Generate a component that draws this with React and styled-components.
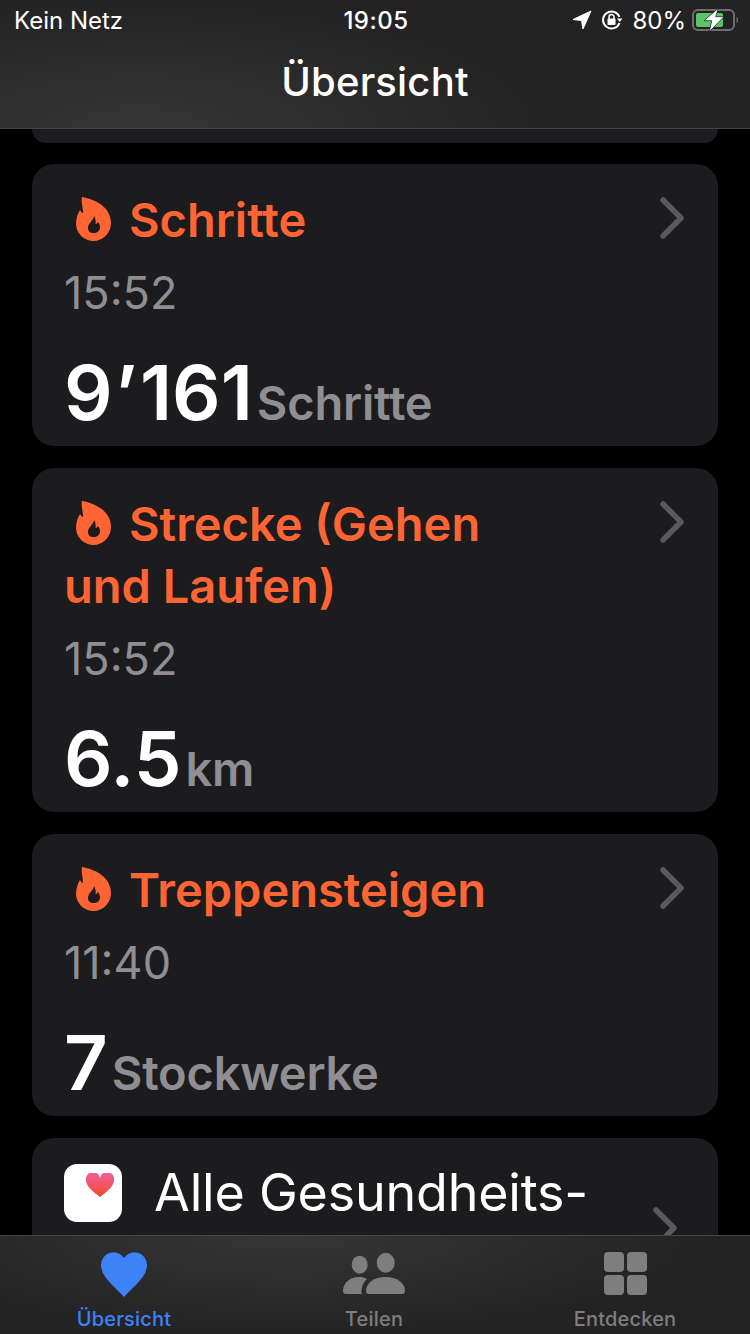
import React from "react";
import styled, { createGlobalStyle } from "styled-components";

const Global = createGlobalStyle`
  html, body { margin: 0; padding: 0; background: #000; }
  body { font-family: Inter, "Liberation Sans", sans-serif; }
`;

const Screen = styled.div`
  width: 750px;
  height: 1334px;
  display: flex;
  flex-direction: column;
  overflow: hidden;
  background: #000;
  color: #fff;
`;

const Header = styled.header`
  flex: none;
  height: 128px;
  border-bottom: 1px solid #464648;
  background: radial-gradient(ellipse 420px 130px at 140px 128px, #363636 0%, #2a2a2a 60%, #232323 100%);
  display: flex;
  flex-direction: column;
`;

const StatusBar = styled.div`
  height: 40px;
  padding: 0 12px 0 14px;
  display: grid;
  grid-template-columns: 1fr auto 1fr;
  align-items: center;
  font-size: 24px;
`;

const StatusRight = styled.div`
  display: flex;
  align-items: center;
  justify-content: flex-end;
  gap: 9px;
`;

const Clock = styled.span`
  font-weight: 500;
  letter-spacing: 0.5px;
`;

const BatteryIcon = styled.svg`
  margin-left: -3px;
`;

const NavTitle = styled.h1`
  margin: 18px 0 0;
  text-align: center;
  font-size: 40px;
  line-height: 48px;
  font-weight: 500;
  letter-spacing: 0.2px;
`;

const Feed = styled.main`
  flex: 1;
  min-height: 0;
  overflow: hidden;
  padding: 0 32px;
  display: flex;
  flex-direction: column;
  gap: 22px;
`;

const Stub = styled.div`
  flex: none;
  height: 14px;
  margin-bottom: -1px;
  background: #1c1c1e;
  border-radius: 0 0 22px 22px;
`;

const Card = styled.article`
  flex: none;
  position: relative;
  background: #1c1c1e;
  border-radius: 22px;
  padding: 25px 32px 0;
  height: ${(p) => p.$h}px;
  box-sizing: border-box;
`;

const Title = styled.div`
  width: 480px;
  color: #ff6534;
  font-size: 47px;
  line-height: 62px;
  font-weight: 600;
`;

const Flame = styled.svg`
  width: 35px;
  height: 44px;
  margin: 0 18px 0 12px;
  vertical-align: -4px;
`;

const Time = styled.div`
  color: #8e8e93;
  font-size: 45px;
  line-height: 50px;
  margin-top: 17px;
`;

const Metric = styled.div`
  position: absolute;
  left: 32px;
  bottom: 9px;
  display: flex;
  align-items: baseline;
  gap: 4px;
`;

const Value = styled.span`
  font-size: 76px;
  line-height: 90px;
  font-weight: 600;
`;

const Tick = styled.span`
  margin: 0 3px 0 2px;
`;

const Unit = styled.span`
  color: #8e8e93;
  font-size: 47px;
  font-weight: 600;
  letter-spacing: -0.2px;
`;

const Chevron = styled.svg`
  position: absolute;
  right: ${(p) => p.$right}px;
  top: ${(p) => p.$top}px;
  width: 24px;
  height: 42px;
`;

const AllRow = styled.article`
  flex: none;
  position: relative;
  height: 200px;
  background: #1c1c1e;
  border-radius: 22px;
  padding: 26px 32px 0;
  display: flex;
  gap: 32px;
`;

const AppIcon = styled.div`
  flex: none;
  width: 58px;
  height: 58px;
  background: #fff;
  border-radius: 13px;
  display: flex;
  justify-content: flex-end;
  padding: 9px 8px 0 0;
  box-sizing: border-box;
`;

const AllText = styled.div`
  font-size: 52px;
  line-height: 58px;
  letter-spacing: -0.2px;
`;

const TabBar = styled.nav`
  flex: none;
  height: 98px;
  border-top: 1px solid #464648;
  background: radial-gradient(ellipse 420px 100px at 290px 0, #363636 0%, #2a2a2a 60%, #232323 100%);
  display: grid;
  grid-template-columns: 248px 252px 250px;
  position: relative;
  z-index: 1;
`;

const Tab = styled.div`
  display: flex;
  flex-direction: column;
  align-items: center;
  color: ${(p) => (p.$active ? "#3d82f6" : "#7e7e7e")};
  font-size: 20px;
  font-weight: 500;
  letter-spacing: 0.2px;
  padding-top: 16px;
  svg { height: 46px; display: block; }
  span { margin-top: 9px; line-height: 24px; }
`;

const FlameIcon = () => (
  <Flame viewBox="0 0 35 44">
    <path
      fill="#ff6534"
      fillRule="evenodd"
      d="M6 0C13 1 35 7 35 26C35 36 27 44 17.500 44C8 44 0 36 0 27C0 21 2 16 4 13C5 15 6 16 7 16C7 10 5 5 6 0ZM18 19C18 23 12 26 12 31C12 34 14 36 17.500 36C21 36 24 34 24 30C24 28 23 26 22 25C21 26.500 20.500 27 19.500 27C20 24 19.500 21 18 19Z"
    />
  </Flame>
);

const ChevronIcon = ({ top, right = 34 }) => (
  <Chevron $top={top} $right={right} viewBox="0 0 24 42">
    <path d="M3 3l18 18L3 39" fill="none" stroke="#5a5a5e" strokeWidth="5.500" strokeLinecap="round" strokeLinejoin="round" />
  </Chevron>
);

const Reading = ({ title, time, value, unit, h }) => (
  <Card $h={h}>
    <Title>
      <FlameIcon />
      {title}
    </Title>
    <Time>{time}</Time>
    <Metric>
      <Value>{value}</Value>
      <Unit>{unit}</Unit>
    </Metric>
    <ChevronIcon top={33} />
  </Card>
);

export default function App() {
  return (
    <Screen>
      <Global />
      <Header>
        <StatusBar>
          <span>Kein Netz</span>
          <Clock>19:05</Clock>
          <StatusRight>
            <svg width="20" height="20" viewBox="0 0 20 20">
              <path d="M19 1L1 9.500l8.500 1L11 19z" fill="#fff" stroke="#fff" strokeLinejoin="round" />
            </svg>
            <svg width="22" height="22" viewBox="0 0 22 22">
              <path d="M18.500 14A8.500 8.500 0 1 1 18.500 8" fill="none" stroke="#fff" strokeWidth="2" />
              <path d="M16 9.500h5.500l-2.700 3.500z" fill="#fff" />
              <rect x="6.500" y="9.500" width="8" height="6.500" rx="1" fill="#fff" />
              <path d="M8 10V8a2.500 2.500 0 0 1 5 0v2" fill="none" stroke="#fff" strokeWidth="1.500" />
            </svg>
            <span>80%</span>
            <BatteryIcon width="46" height="24" viewBox="0 0 46 24">
              <rect x="1" y="2" width="41" height="20" rx="5" fill="none" stroke="#6e6e6e" strokeWidth="2" />
              <rect x="4" y="5" width="27" height="14" rx="2" fill="#5ac466" />
              <path d="M44.500 9c1 .5 1.500 1.500 1.500 3s-.5 2.500-1.500 3z" fill="#6e6e6e" />
              <path d="M26.300 .3L12 12.700h7.700L17.300 23.700 32 8.700h-8.300z" fill="#fff" stroke="#232323" strokeWidth="0.800" />
            </BatteryIcon>
          </StatusRight>
        </StatusBar>
        <NavTitle>Übersicht</NavTitle>
      </Header>
      <Feed>
        <Stub />
        <Reading h={282} title="Schritte" time="15:52" value={<>9<Tick>’</Tick>161</>} unit="Schritte" />
        <Reading h={344} title="Strecke (Gehen und Laufen)" time="15:52" value="6.5" unit="km" />
        <Reading h={282} title="Treppensteigen" time="11:40" value="7" unit="Stockwerke" />
        <AllRow>
          <AppIcon>
            <svg width="28" height="24" viewBox="0 0 28 24">
              <defs>
                <linearGradient id="hg" x1="0" y1="0" x2="0" y2="1">
                  <stop offset="0" stopColor="#f160a0" />
                  <stop offset="1" stopColor="#f04a2c" />
                </linearGradient>
              </defs>
              <path d="M14 24C6 18 0 13 0 7a7 7 0 0 1 14-2 7 7 0 0 1 14 2c0 6-6 11-14 17z" fill="url(#hg)" />
            </svg>
          </AppIcon>
          <AllText>Alle Gesundheits-</AllText>
          <ChevronIcon top={69} right={41} />
        </AllRow>
      </Feed>
      <TabBar>
        <Tab $active>
          <svg width="46" height="46" viewBox="0 0 46 46">
            <path d="M23 45C14 35 0 25 0 13A12.500 12.500 0 0 1 23 6 12.500 12.500 0 0 1 46 13c0 12-14 22-23 32z" fill="#3d82f6" />
          </svg>
          <span>Übersicht</span>
        </Tab>
        <Tab>
          <svg width="62" height="46" viewBox="0 0 62 46">
            <g fill="#7e7e7e">
              <ellipse cx="42.700" cy="10.700" rx="9" ry="10" />
              <ellipse cx="16.700" cy="12.700" rx="8" ry="9" />
              <path d="M23 39c0-8 8-14 19.500-14S62 31 62 39c0 2-1 3-3 3H26c-2 0-3-1-3-3z" />
              <path d="M0 39c0-8 7-14 16-14 3 0 5 .5 8 2-3 3-5 6-5.500 11-.2 2 0 3 .5 4H3c-2 0-3-1-3-3z" />
            </g>
          </svg>
          <span>Teilen</span>
        </Tab>
        <Tab>
          <svg width="43" height="46" viewBox="0 0 43 46">
            <g fill="#7e7e7e">
              <rect x="0" y="0" width="20" height="20" rx="4" />
              <rect x="23" y="0" width="20" height="20" rx="4" />
              <rect x="0" y="23" width="20" height="20" rx="4" />
              <rect x="23" y="23" width="20" height="20" rx="4" />
            </g>
          </svg>
          <span>Entdecken</span>
        </Tab>
      </TabBar>
    </Screen>
  );
}
